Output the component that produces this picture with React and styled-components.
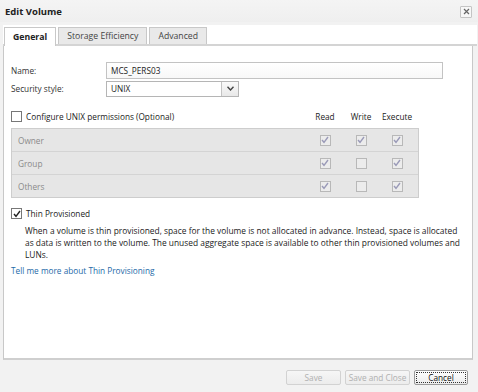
import React, { useState } from 'react';
import styled, { createGlobalStyle } from 'styled-components';

const GlobalStyle = createGlobalStyle`
  html, body {
    margin: 0;
    padding: 0;
    background: #f2f2f2;
  }
  body {
    font-family: "Open Sans", "DejaVu Sans", sans-serif;
    font-size: 8.25px;
    color: #333;
  }
`;

const Dialog = styled.div`
  width: 478px;
  height: 392px;
  background: #f2f2f2;
  display: flex;
  flex-direction: column;
  box-sizing: border-box;
`;

const TitleBar = styled.div`
  height: 22px;
  display: flex;
  align-items: center;
  justify-content: space-between;
  padding: 0 6px 0 5px;
  background: linear-gradient(#f4f4f4, #efefef);
`;

const Title = styled.span`
  font-weight: bold;
  font-size: 9.5px;
  color: #222;
`;

const CloseButton = styled.button`
  width: 12px;
  height: 12px;
  padding: 0;
  margin-top: 1px;
  border: 1px solid #c4c4c4;
  border-radius: 1px;
  background: #f7f7f7;
  display: flex;
  align-items: center;
  justify-content: center;
`;

const TabStrip = styled.div`
  background: #fff;
  margin: 3px 1px 0 3px;
  padding: 2px 0 0 1px;
  display: flex;
  gap: 2px;
  height: 17px;
  border-bottom: 2px solid #d4d4d4;
`;

const Tab = styled.div`
  padding: 0 8px;
  display: flex;
  align-items: center;
  border: 1px solid #c8c8c8;
  border-bottom: none;
  background: ${(p) => (p.$active ? '#fff' : '#e9e9e9')};
  font-weight: ${(p) => (p.$active ? 'bold' : 'normal')};
  color: ${(p) => (p.$active ? '#222' : '#444')};
  font-size: 8.7px;
  margin-bottom: ${(p) => (p.$active ? '-2px' : '0')};
  position: relative;
`;

const Panel = styled.div`
  background: #fff;
  margin: 0 5px 0 3px;
  height: 314px;
  border: 1px solid #c8c8c8;
  border-top: none;
  border-bottom: 2px solid #cfcfcf;
  padding: 16px 29px 0 7px;
  box-sizing: border-box;
`;

const FieldRow = styled.div`
  display: flex;
  align-items: center;
  height: 17px;
  margin-bottom: 1px;
`;

const Label = styled.div`
  width: 95px;
`;

const TextInput = styled.div`
  flex: 1;
  height: 15px;
  border: 1px solid #c3c3c3;
  background: linear-gradient(#fff, #f8f8f8);
  padding-left: 4px;
  display: flex;
  align-items: center;
  color: #222;
`;

const Select = styled.div`
  width: 133px;
  height: 16px;
  border: 1px solid #b5b5b5;
  display: flex;
  align-items: center;
  color: #222;
  box-sizing: border-box;
`;

const SelectValue = styled.div`
  flex: 1;
  padding-left: 4px;
`;

const SelectArrow = styled.div`
  width: 16px;
  height: 100%;
  border-left: 1px solid #c3c3c3;
  background: linear-gradient(#fafafa, #e8e8e8);
  display: flex;
  align-items: center;
  justify-content: center;
`;

const PermHeader = styled.div`
  display: flex;
  align-items: center;
  margin-top: 12px;
  height: 14px;
  width: 408px;
  padding-right: 4px;
  box-sizing: border-box;
`;

const CheckLabel = styled.label`
  display: flex;
  align-items: center;
  gap: 4px;
  flex: 1;
  color: #222;
`;

const Box = styled.span`
  width: 9px;
  height: 9px;
  border: 1px solid ${(p) => (p.$disabled ? '#b8b8b8' : '#777')};
  background: ${(p) => (p.$disabled ? '#ececec' : '#fff')};
  display: inline-flex;
  align-items: center;
  justify-content: center;
  flex-shrink: 0;
`;

const ColHead = styled.div`
  width: ${(p) => p.$w}px;
  text-align: center;
  color: #222;
`;

const PermTable = styled.div`
  width: 408px;
  margin-top: 5px;
  border: 1px solid #cdcdcd;
  background: #e6e6e6;
  box-sizing: border-box;
`;

const PermRow = styled.div`
  display: flex;
  align-items: center;
  height: 22px;
  padding-right: 3px;
  border-top: ${(p) => (p.$first ? 'none' : '1px solid #d4d4d4')};
`;

const PermName = styled.div`
  flex: 1;
  padding-left: 6px;
  color: #8a8a8a;
`;

const PermCell = styled.div`
  width: ${(p) => p.$w}px;
  display: flex;
  justify-content: center;
`;

const ThinRow = styled.div`
  margin-top: 10px;
  display: flex;
  align-items: center;
  gap: 4px;
  color: #222;
`;

const Description = styled.p`
  margin: 6px 0 0 14px;
  width: 450px;
  line-height: 12px;
  color: #222;
  font-size: 8.4px;
`;

const Link = styled.a`
  display: block;
  margin-top: 4px;
  color: #1e6aa8;
  text-decoration: none;
`;

const Footer = styled.div`
  flex: 1;
  display: flex;
  justify-content: flex-end;
  align-items: center;
  gap: 4px;
  padding-right: 10px;
  padding-top: 2px;
`;

const Button = styled.button`
  height: 15px;
  padding: 0;
  width: ${(p) => p.$w}px;
  font-family: inherit;
  font-size: 8.25px;
  border: 1px solid ${(p) => (p.disabled ? '#d2d2d2' : '#9a9a9a')};
  border-radius: 2px;
  background: ${(p) => (p.disabled ? 'linear-gradient(#f6f6f6, #ececec)' : 'linear-gradient(#fff, #ececec)')};
  color: ${(p) => (p.disabled ? '#b0b0b0' : '#111')};
  outline: ${(p) => (p.$focus ? '1px dotted #333' : 'none')};
  outline-offset: -3px;
`;

const Check = ({ color }) => (
  <svg width="8" height="8" viewBox="0 0 8 8">
    <path d="M1 4 L3 6.3 L7 1" fill="none" stroke={color} strokeWidth="1.4" />
  </svg>
);

const cols = [
  { key: 'read', w: 36 },
  { key: 'write', w: 36 },
  { key: 'exec', w: 36 },
];

const perms = [
  { name: 'Owner', read: true, write: true, exec: true },
  { name: 'Group', read: true, write: false, exec: true },
  { name: 'Others', read: true, write: false, exec: true },
];

export default function App() {
  const [thin] = useState(true);

  return (
    <>
      <GlobalStyle />
      <Dialog>
        <TitleBar>
          <Title>Edit Volume</Title>
          <CloseButton>
            <svg width="7" height="7" viewBox="0 0 7 7">
              <path d="M1 1 L6 6 M6 1 L1 6" stroke="#666" strokeWidth="1.2" />
            </svg>
          </CloseButton>
        </TitleBar>
        <TabStrip>
          <Tab $active>General</Tab>
          <Tab>Storage Efficiency</Tab>
          <Tab>Advanced</Tab>
        </TabStrip>
        <Panel>
          <FieldRow>
            <Label>Name:</Label>
            <TextInput>MCS_PERS03</TextInput>
          </FieldRow>
          <FieldRow>
            <Label>Security style:</Label>
            <Select>
              <SelectValue>UNIX</SelectValue>
              <SelectArrow>
                <svg width="7" height="5" viewBox="0 0 7 5">
                  <path d="M0.5 0.8 L3.5 4 L6.5 0.8" fill="none" stroke="#444" strokeWidth="1.4" />
                </svg>
              </SelectArrow>
            </Select>
          </FieldRow>
          <PermHeader>
            <CheckLabel>
              <Box />
              Configure UNIX permissions (Optional)
            </CheckLabel>
            <ColHead $w={cols[0].w}>Read</ColHead>
            <ColHead $w={cols[1].w}>Write</ColHead>
            <ColHead $w={cols[2].w}>Execute</ColHead>
          </PermHeader>
          <PermTable>
            {perms.map((p, i) => (
              <PermRow key={p.name} $first={i === 0}>
                <PermName>{p.name}</PermName>
                {cols.map((c) => (
                  <PermCell key={c.key} $w={c.w}>
                    <Box $disabled>{p[c.key] && <Check color="#9a9ab8" />}</Box>
                  </PermCell>
                ))}
              </PermRow>
            ))}
          </PermTable>
          <ThinRow>
            <Box>{thin && <Check color="#222" />}</Box>
            Thin Provisioned
          </ThinRow>
          <Description>
            When a volume is thin provisioned, space for the volume is not allocated in advance. Instead, space is allocated
            <br />
            as data is written to the volume. The unused aggregate space is available to other thin provisioned volumes and
            <br />
            LUNs.
          </Description>
          <Link href="#">Tell me more about Thin Provisioning</Link>
        </Panel>
        <Footer>
          <Button disabled $w={55}>Save</Button>
          <Button disabled $w={65}>Save and Close</Button>
          <Button $w={54} $focus>Cancel</Button>
        </Footer>
      </Dialog>
    </>
  );
}
